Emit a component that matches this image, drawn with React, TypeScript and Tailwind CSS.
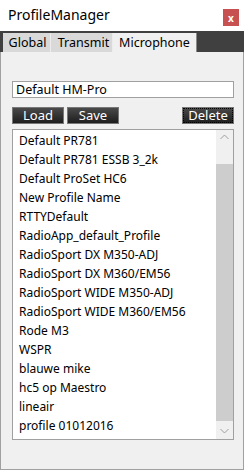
import React from "react";

const items = [
  "Default PR781",
  "Default PR781 ESSB 3_2k",
  "Default ProSet HC6",
  "New Profile Name",
  "RTTYDefault",
  "RadioApp_default_Profile",
  "RadioSport DX M350-ADJ",
  "RadioSport DX M360/EM56",
  "RadioSport WIDE M350-ADJ",
  "RadioSport WIDE M360/EM56",
  "Rode M3",
  "WSPR",
  "blauwe mike",
  "hc5 op Maestro",
  "lineair",
  "profile 01012016",
];

export default function App() {
  return (
    <div
      className="w-[244px] h-[471px] bg-white flex flex-col overflow-hidden text-black"
      style={{ fontFamily: "'Segoe UI', 'Noto Sans', 'Open Sans', sans-serif" }}
    >
      {/* title bar */}
      <div className="h-[31px] flex items-start justify-between shrink-0">
        <div className="pl-[8px] pt-[5px] text-[14px] leading-[19px]">ProfileManager</div>
        <div className="mt-[9px] mr-[5px] w-[16px] h-[17px] bg-[#c75050] flex items-center justify-center text-white text-[10px] font-bold leading-none">
          x
        </div>
      </div>
      {/* tab strip */}
      <div className="h-[21px] bg-[#404040] flex items-end pl-[3px] shrink-0">
        <div className="w-[47px] h-[19px] bg-[#d9d9d9] text-[12.5px] leading-[19px] text-center pl-[2px]">Global</div>
        <div className="w-[1px] h-[19px] bg-[#ececec]" />
        <div className="w-[61px] h-[19px] bg-[#d9d9d9] text-[12.5px] leading-[19px] text-center pl-[4px]">Transmit</div>
        <div className="w-[1px] h-[19px] bg-[#ececec]" />
        <div className="w-[84px] h-[19px] bg-[#f0f0f0] text-[12.5px] leading-[19px] text-center border-r border-[#8a8a8a]">Microphone</div>
      </div>
      {/* body */}
      <div className="flex-1 bg-[#f0f0f0] border-l border-r border-b border-[#a0a0a0] flex flex-col pl-[11px] pr-[9px] pt-[29px] mb-[1px]">
        <div className="h-[17px] bg-white border border-[#a0a0a0] text-[12.5px] leading-[15px] pl-[3px]">Default HM-Pro</div>
        <div className="flex mt-[9px] h-[17px]">
          <button className="w-[52px] h-[17px] bg-gradient-to-b from-[#4a4a4a] to-[#1e1e1e] text-white text-[13px] leading-[15px] border border-[#777]">Load</button>
          <button className="ml-[3px] w-[52px] h-[17px] bg-gradient-to-b from-[#4a4a4a] to-[#1e1e1e] text-white text-[13px] leading-[15px] border border-[#777]">Save</button>
          <div className="flex-1" />
          <button className="w-[52px] h-[17px] bg-gradient-to-b from-[#4a4a4a] to-[#1e1e1e] text-white text-[13px] leading-[13px] border border-[#777] outline outline-1 outline-dotted outline-black -outline-offset-2">Delete</button>
        </div>
        <div className="mt-[5px] h-[311px] bg-white border border-[#a0a0a0] flex">
          <div className="flex-1 flex flex-col pl-[6px] pt-[1px]">
            {items.map((t) => (
              <div key={t} className="h-[19px] text-[12px] leading-[19px] whitespace-nowrap">
                {t}
              </div>
            ))}
          </div>
          <div className="w-[17px] flex flex-col bg-[#f0f0f0]">
            <div className="h-[34px] flex items-start justify-center pt-[4px]">
              <svg width="9" height="6" viewBox="0 0 9 6">
                <path d="M0.5 5 L4.5 1 L8.5 5" fill="none" stroke="#a0a0a0" strokeWidth="1" />
              </svg>
            </div>
            <div className="flex-1 bg-[#cdcdcd]" />
            <div className="h-[18px] flex items-end justify-center pb-[5px]">
              <svg width="9" height="6" viewBox="0 0 9 6">
                <path d="M0.5 1 L4.5 5 L8.5 1" fill="none" stroke="#a0a0a0" strokeWidth="1" />
              </svg>
            </div>
          </div>
        </div>
      </div>
    </div>
  );
}
